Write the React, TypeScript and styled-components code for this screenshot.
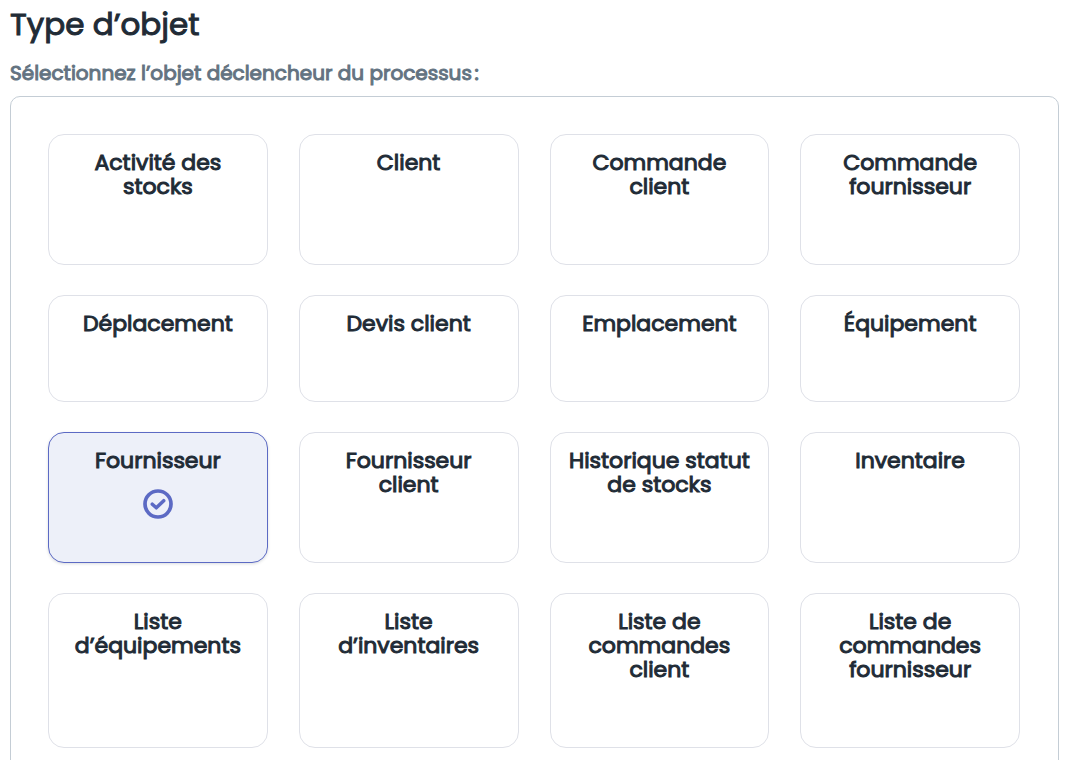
import React, { useState } from "react";
import styled, { createGlobalStyle } from "styled-components";

const GlobalStyle = createGlobalStyle`
  * { box-sizing: border-box; }
  body {
    margin: 0;
    background: #ffffff;
    color: #212b36;
    font-family: Poppins, Inter, "Open Sans", sans-serif;
    font-weight: 400;
    -webkit-text-stroke: 1px currentColor;
  }
`;

const Page = styled.main`
  padding: 4px 11px 24px 10px;
`;

const Title = styled.h1`
  margin: 0;
  font-size: 31px;
  line-height: 40px;
  font-weight: 400;
`;

const Fields = styled.fieldset`
  margin: 0;
  padding: 0;
  border: 0;
  min-width: 0;
`;

const Legend = styled.legend`
  padding: 14px 0 8px;
  font-size: 20px;
  line-height: 30px;
  color: #637381;
`;

const Panel = styled.div`
  display: grid;
  grid-template-columns: repeat(4, minmax(0, 1fr));
  gap: 30px 31px;
  padding: 37px 38px 37px 37px;
  border: 1px solid #c4cdd5;
  border-radius: 10px;
`;

const Card = styled.label<{ $selected: boolean }>`
  display: flex;
  flex-direction: column;
  align-items: center;
  gap: 16px;
  padding: 16px 16px 65px;
  border: 1px solid ${(p) => (p.$selected ? "#5c6ac4" : "#dfe1e8")};
  border-radius: 16px;
  background: ${(p) => (p.$selected ? "#edf0f9" : "#ffffff")};
  box-shadow: ${(p) => (p.$selected ? "0 1px 3px rgba(31, 42, 55, 0.16)" : "none")};
  cursor: pointer;
`;

const Radio = styled.input`
  appearance: none;
  position: absolute;
  width: 1px;
  height: 1px;
  margin: 0;
  opacity: 0;
`;

const CardName = styled.span`
  font-size: 22px;
  line-height: 24px;
  text-align: center;
`;

const Check = styled.svg`
  display: block;
  flex: none;
  width: 30px;
  height: 30px;
  margin-bottom: -46px;
`;

const objects = [
  "Activité des stocks",
  "Client",
  "Commande client",
  "Commande fournisseur",
  "Déplacement",
  "Devis client",
  "Emplacement",
  "Équipement",
  "Fournisseur",
  "Fournisseur client",
  "Historique statut de stocks",
  "Inventaire",
  "Liste d’équipements",
  "Liste d’inventaires",
  "Liste de commandes client",
  "Liste de commandes fournisseur",
];

export default function App() {
  const [selected, setSelected] = useState("Fournisseur");
  return (
    <>
      <GlobalStyle />
      <Page>
        <Title>Type d’objet</Title>
        <Fields>
          <Legend>Sélectionnez l’objet déclencheur du processus{"\u202f"}:</Legend>
          <Panel>
            {objects.map((name) => (
              <Card key={name} $selected={name === selected}>
                <Radio
                  type="radio"
                  name="object"
                  value={name}
                  checked={name === selected}
                  onChange={() => setSelected(name)}
                />
                <CardName>{name}</CardName>
                {name === selected && (
                  <Check viewBox="0 0 30 30" fill="none" stroke="#5c6ac4" aria-hidden="true">
                    <circle cx="15" cy="15" r="13" strokeWidth="3.7" />
                    <path
                      d="M9.3 15.2l4 3.6 7.4-7.1"
                      strokeWidth="3.5"
                      strokeLinecap="round"
                      strokeLinejoin="round"
                    />
                  </Check>
                )}
              </Card>
            ))}
          </Panel>
        </Fields>
      </Page>
    </>
  );
}
